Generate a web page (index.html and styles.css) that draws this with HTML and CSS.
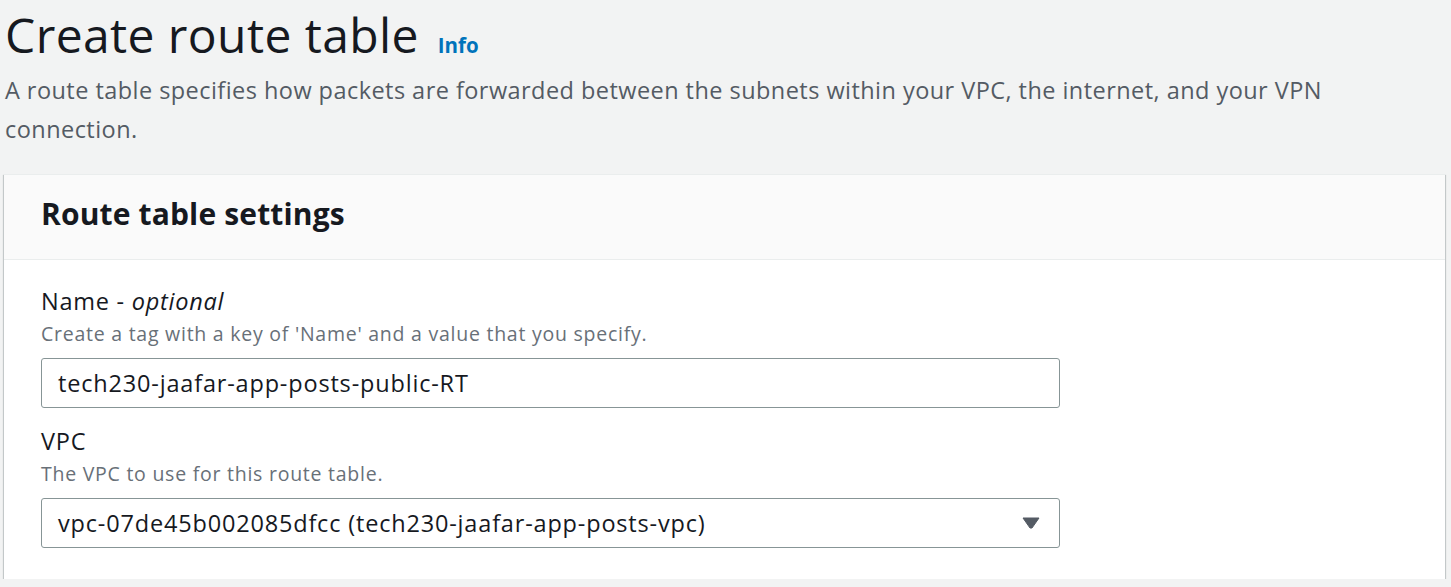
FILE: index.html
```html
<!DOCTYPE html>
<html lang="en">
<head>
<meta charset="utf-8">
<title>Create route table</title>
<link rel="stylesheet" href="styles.css">
</head>
<body>
<main class="page">
  <header class="page-header">
    <h1 class="title">Create route table <a class="info" href="#">Info</a></h1>
    <p class="description">A route table specifies how packets are forwarded between the subnets within your VPC, the internet, and your VPN connection.</p>
  </header>
  <section class="card">
    <div class="card-header">
      <h2 class="card-title">Route table settings</h2>
    </div>
    <div class="card-body">
      <div class="field">
        <label class="label">Name - <i>optional</i></label>
        <div class="hint">Create a tag with a key of 'Name' and a value that you specify.</div>
        <div class="input">tech230-jaafar-app-posts-public-RT</div>
      </div>
      <div class="field">
        <label class="label">VPC</label>
        <div class="hint">The VPC to use for this route table.</div>
        <div class="input select">
          <span>vpc-07de45b002085dfcc (tech230-jaafar-app-posts-vpc)</span>
          <svg class="caret" width="18" height="12" viewBox="0 0 18 12"><path d="M1 1 H17 L10 11 H8 Z" fill="#545b64" stroke="#545b64" stroke-width="1" stroke-linejoin="round"/></svg>
        </div>
      </div>
    </div>
  </section>
</main>
</body>
</html>
```

FILE: styles.css
```css
html, body {
  margin: 0;
  padding: 0;
  background: #f2f3f3;
}
body {
  font-family: "Open Sans", Lato, sans-serif;
  color: #16191f;
}
.page {
  padding: 0 6px 0 4px;
}
.page-header {
  padding: 7px 0 0 1px;
}
.title {
  margin: 0;
  font-size: 48px;
  font-weight: 400;
  line-height: 56px;
  letter-spacing: 0.4px;
  color: #16191f;
}
.info {
  font-size: 20.5px;
  line-height: 20px;
  font-weight: 700;
  letter-spacing: 0;
  color: #0073bb;
  text-decoration: none;
  margin-left: 6px;
}
.description {
  margin: 8px 0 0;
  font-size: 23.5px;
  line-height: 39px;
  letter-spacing: 0.45px;
  color: #545b64;
}
.card {
  margin-top: 25px;
  background: #ffffff;
  border-top: 1px solid #eaeded;
  box-shadow: 0 1px 1px 0 rgba(0, 28, 36, 0.3), 1px 1px 1px 0 rgba(0, 28, 36, 0.15), -1px 1px 1px 0 rgba(0, 28, 36, 0.15);
}
.card-header {
  background: #fafafa;
  border-bottom: 1px solid #eaeded;
  height: 84px;
  box-sizing: content-box;
  padding: 0 37px;
}
.card-title {
  margin: 0;
  padding-top: 19px;
  font-size: 30px;
  line-height: 40px;
  letter-spacing: 0.15px;
  font-weight: 700;
  color: #16191f;
}
.card-body {
  padding: 24px 37px 31px;
  display: flex;
  flex-direction: column;
  gap: 16px;
}
.field {
  display: flex;
  flex-direction: column;
}
.label {
  font-size: 23.5px;
  line-height: 34px;
  letter-spacing: 0.75px;
  color: #16191f;
  margin-bottom: 2px;
}
.hint {
  font-size: 19.5px;
  line-height: 28px;
  letter-spacing: 0.75px;
  color: #687078;
  margin-bottom: 10px;
}
.input {
  width: 1019px;
  height: 50px;
  box-sizing: border-box;
  border: 1px solid #879596;
  border-radius: 3px;
  background: #fff;
  font-size: 23.5px;
  letter-spacing: 0.82px;
  display: flex;
  align-items: center;
  padding: 0 16px;
  color: #16191f;
}
.select {
  justify-content: space-between;
  padding-right: 19px;
}
.caret {
  display: block;
}
```
